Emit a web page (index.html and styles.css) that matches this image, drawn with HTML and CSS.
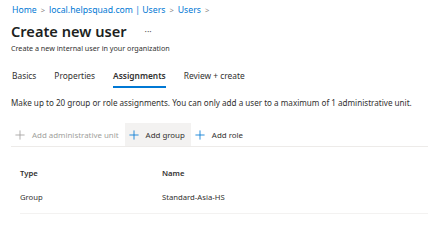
FILE: index.html
```html
<!DOCTYPE html>
<html lang="en">
<head>
<meta charset="utf-8">
<title>Create new user</title>
<link rel="stylesheet" href="styles.css">
</head>
<body>
<div class="page">
  <nav class="crumbs">
    <span class="crumb">Home</span><span class="sep">&gt;</span><span class="crumb">local.helpsquad.com | Users</span><span class="sep">&gt;</span><span class="crumb">Users</span><span class="sep">&gt;</span>
  </nav>
  <div class="title-row">
    <h1 class="title">Create new user</h1>
    <span class="more">···</span>
  </div>
  <p class="subtitle">Create a new internal user in your organization</p>

  <div class="tabs">
    <span class="tab">Basics</span>
    <span class="tab">Properties</span>
    <span class="tab active">Assignments</span>
    <span class="tab">Review + create</span>
  </div>

  <p class="desc">Make up to 20 group or role assignments. You can only add a user to a maximum of 1 administrative unit.</p>

  <div class="toolbar">
    <span class="btn disabled"><svg class="plus" viewBox="0 0 12 12"><path d="M6 0.5V11.5M0.5 6H11.5"/></svg>Add administrative unit</span>
    <span class="btn hover"><svg class="plus" viewBox="0 0 12 12"><path d="M6 0.5V11.5M0.5 6H11.5"/></svg>Add group</span>
    <span class="btn"><svg class="plus" viewBox="0 0 12 12"><path d="M6 0.5V11.5M0.5 6H11.5"/></svg>Add role</span>
  </div>

  <div class="table">
    <div class="row head"><span class="c1">Type</span><span class="c2">Name</span></div>
    <div class="row"><span class="c1">Group</span><span class="c2">Standard-Asia-HS</span></div>
  </div>
</div>
</body>
</html>
```
FILE: styles.css
```css
html, body {
  margin: 0;
  padding: 0;
  background: #ffffff;
}
body {
  font-family: "Segoe UI", "Noto Sans", "Open Sans", sans-serif;
  color: #323130;
}
.page {
  padding: 3px 0 0 11px;
}
.crumbs {
  display: flex;
  align-items: center;
  font-size: 8.7px;
  line-height: 14px;
  color: #0078d4;
  padding-left: 1px;
}
.sep {
  color: #8a8886;
  margin: 0 4px;
  font-size: 7.5px;
}
.title-row {
  display: flex;
  align-items: center;
  margin-top: 4px;
  height: 20px;
}
.title {
  margin: 0;
  font-size: 14.6px;
  font-weight: 600;
  line-height: 20px;
  color: #201f1e;
}
.more {
  margin-left: 18px;
  font-size: 9px;
  color: #605e5c;
}
.subtitle {
  margin: 2px 0 0 0;
  font-size: 7.2px;
  line-height: 11px;
  color: #323130;
}
.tabs {
  display: flex;
  gap: 18px;
  margin-top: 15px;
  padding-left: 1px;
}
.tab {
  font-size: 8.4px;
  line-height: 14px;
  padding-bottom: 3px;
  border-bottom: 2px solid transparent;
}
.tab.active {
  font-weight: 600;
  border-bottom-color: #0078d4;
}
.desc {
  margin: 9px 0 0 0;
  font-size: 8.1px;
  line-height: 12px;
}
.toolbar {
  display: flex;
  align-items: center;
  margin-top: 14px;
  border-bottom: 1px solid #edebe9;
  height: 23px;
}
.btn {
  display: flex;
  align-items: center;
  height: 100%;
  padding: 0 5px 0 4px;
  font-size: 7.9px;
  color: #323130;
}
.btn .plus {
  width: 10px;
  height: 10px;
  margin-right: 7px;
  fill: none;
  stroke: #0078d4;
  stroke-width: 1;
}
.btn.disabled {
  color: #a19f9d;
}
.btn.disabled .plus {
  stroke: #a19f9d;
}
.btn.hover {
  background: #f3f2f1;
  margin-left: 1px;
  padding-right: 6px;
}
.table {
  margin-top: 15px;
  padding-left: 9px;
}
.row {
  display: flex;
  font-size: 7.7px;
  line-height: 12px;
  padding: 5px 0;
}
.row.head {
  font-weight: 600;
  padding-bottom: 6px;
}
.row + .row {
  border-bottom: 1px solid #f3f2f1;
  padding-top: 6px;
  padding-bottom: 10px;
}
.c1 {
  width: 142px;
}
```
